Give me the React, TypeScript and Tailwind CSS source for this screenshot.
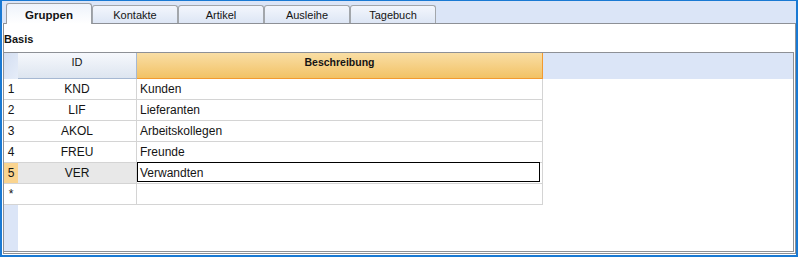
import React from "react";

const rows = [
  { n: "1", id: "KND", d: "Kunden" },
  { n: "2", id: "LIF", d: "Lieferanten" },
  { n: "3", id: "AKOL", d: "Arbeitskollegen" },
  { n: "4", id: "FREU", d: "Freunde" },
  { n: "5", id: "VER", d: "Verwandten", sel: true },
  { n: "*", id: "", d: "" },
];

const tabs = ["Kontakte", "Artikel", "Ausleihe", "Tagebuch"];

export default function App() {
  return (
    <div className="w-[798px] h-[257px] overflow-hidden border-t border-x-2 border-b-2 border-[#1979d3] bg-[#dbe5f7] flex flex-col font-['Liberation_Sans',Arial,sans-serif] text-[#141414]">
      {/* tab strip */}
      <div className="h-[22px] shrink-0 flex items-end pl-[4px]">
        <div className="relative z-10 -mb-px h-[21px] w-[86px] rounded-t-[3px] border-t border-x border-[#9a9ea4] bg-gradient-to-b from-[#eef3fb] to-white flex justify-center pt-[5px]">
          <span className="text-[11.5px] font-bold leading-[13px]">Gruppen</span>
        </div>
        {tabs.map((t) => (
          <div
            key={t}
            className="h-[18px] w-[86px] rounded-t-[3px] border-t border-x border-[#a2a6ab] bg-gradient-to-b from-[#f3f6fc] to-[#dde6f5] flex justify-center pt-[3px]"
          >
            <span className="text-[11px] leading-[13px]">{t}</span>
          </div>
        ))}
      </div>

      {/* body */}
      <div className="flex-1 bg-white pl-px pb-px flex flex-col">
        <div className="flex-1 border border-[#8d9096] bg-white flex flex-col">
          <div className="h-[28px] shrink-0 pt-[9px]">
            <span className="text-[11px] font-bold leading-[13px] block">Basis</span>
          </div>

          {/* grid */}
          <div className="h-[200px] mr-px border-t border-r border-b border-[#8d9096] flex flex-col">
            {/* header */}
            <div className="h-[26px] shrink-0 flex">
              <div className="w-[14px] bg-gradient-to-br from-[#d3def1] to-[#e6edf9]" />
              <div className="w-[119px] border-r border-b border-[#a6b8d2] bg-gradient-to-b from-[#f6f8fc] to-[#dde5f0] flex justify-center pt-[3px]">
                <span className="text-[11px] leading-[13px]">ID</span>
              </div>
              <div className="w-[406px] border-r border-b border-[#f29a30] bg-gradient-to-b from-[#f9dea4] to-[#f2c264] flex justify-center pt-[3px]">
                <span className="text-[10.5px] font-bold leading-[13px]">Beschreibung</span>
              </div>
              <div className="flex-1 bg-[#dbe5f7]" />
            </div>

            {/* rows */}
            {rows.map((r) => (
              <div key={r.n} className="h-[21px] w-[539px] shrink-0 flex border-b border-[#d4d4d4] text-[12px] leading-[19px]">
                <div className={`w-[14px] pt-px text-center ${r.sel ? "bg-[#fad48f]" : "bg-white"}`}>{r.n}</div>
                <div className={`w-[119px] pt-px text-center border-r border-[#d4d4d4] ${r.sel ? "bg-[#e8e8e8]" : "bg-white"}`}>
                  {r.id}
                </div>
                <div className="w-[406px] border-r border-[#d4d4d4]">
                  {r.sel ? (
                    <div className="-mt-px mr-[2px] h-[20px] border border-black pl-[2px] pt-px">{r.d}</div>
                  ) : (
                    <div className="pl-[3px] pt-px">{r.d}</div>
                  )}
                </div>
              </div>
            ))}

            <div className="flex-1 flex">
              <div className="w-[14px] bg-[#dbe5f7]" />
            </div>
          </div>
        </div>
      </div>
    </div>
  );
}
